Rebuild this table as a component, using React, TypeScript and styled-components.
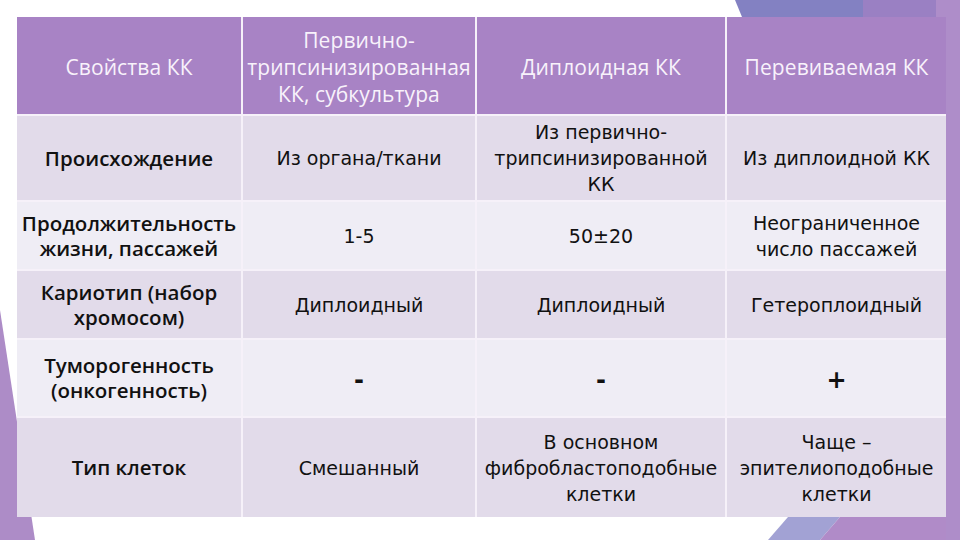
import React from "react";
import styled, { createGlobalStyle } from "styled-components";

const GlobalStyle = createGlobalStyle`
  html, body {
    margin: 0;
    padding: 0;
    background: #ffffff;
  }
`;

const Slide = styled.div`
  position: relative;
  width: 960px;
  height: 540px;
  overflow: hidden;
  background: #ffffff;
  padding: 17px 0 0 17px;
  box-sizing: border-box;
`;

const Decor = styled.svg`
  position: absolute;
  left: 0;
  top: 0;
  width: 960px;
  height: 540px;
`;

const Table = styled.div`
  position: relative;
  width: 929px;
  height: 500px;
  display: grid;
  grid-template-columns: 224px 232px 248px 219px;
  grid-template-rows: 97px 84px 67px 67px 76px 99px;
  gap: 2px;
  background: #f6f1f9;
`;

const Cell = styled.div<{ $tone: "head" | "dark" | "light" }>`
  display: flex;
  align-items: center;
  justify-content: center;
  text-align: center;
  padding: 0;
  background: ${(p) =>
    p.$tone === "head" ? "#a883c5" : p.$tone === "dark" ? "#e2dbea" : "#efedf5"};
  color: ${(p) => (p.$tone === "head" ? "#f8f2fb" : "#111111")};
  font-family: "DejaVu Sans", "Liberation Sans", sans-serif;
  font-size: 19px;
  line-height: 26px;
  white-space: pre-line;
`;

const HeadText = styled.span`
  font-family: "Open Sans", "DejaVu Sans", sans-serif;
  font-weight: 500;
  font-size: 21px;
  line-height: 27px;
  letter-spacing: 0.1px;
  padding-top: 4px;
`;

const PropText = styled.span`
  font-family: "Open Sans", "DejaVu Sans", sans-serif;
  font-weight: 600;
  font-size: 20.5px;
  line-height: 25px;
`;

const Sign = styled.span`
  font-family: "DejaVu Sans", sans-serif;
  font-weight: 700;
  font-size: 24px;
  padding-top: 4px;
`;

const headers = [
  "Свойства КК",
  "Первично-\nтрипсинизированная\nКК, субкультура",
  "Диплоидная КК",
  "Перевиваемая КК",
];

const rows: { prop: string; vals: string[]; sign?: boolean }[] = [
  {
    prop: "Происхождение",
    vals: ["Из органа/ткани", "Из первично-\nтрипсинизированной\nКК", "Из диплоидной КК"],
  },
  {
    prop: "Продолжительность\nжизни, пассажей",
    vals: ["1-5", "50±20", "Неограниченное\nчисло пассажей"],
  },
  {
    prop: "Кариотип (набор\nхромосом)",
    vals: ["Диплоидный", "Диплоидный", "Гетероплоидный"],
  },
  {
    prop: "Туморогенность\n(онкогенность)",
    vals: ["-", "-", "+"],
    sign: true,
  },
  {
    prop: "Тип клеток",
    vals: ["Смешанный", "В основном\nфибробластоподобные\nклетки", "Чаще –\nэпителиоподобные\nклетки"],
  },
];

export default function App() {
  return (
    <Slide>
      <GlobalStyle />
      <Decor viewBox="0 0 960 540">
        <polygon points="735,0 870,0 870,17 742,17" fill="#8381c2" />
        <polygon points="863,0 940,0 940,17 863,17" fill="#9a80c3" />
        <polygon points="936,0 960,0 960,540 946,540 946,17 936,17" fill="#ae8dc9" />
        <polygon points="0,310 35,540 0,540" fill="#ad8cc7" />
        <polygon points="768,540 788,517 840,517 820,540" fill="#a2a2d4" />
        <polygon points="820,540 840,517 946,517 946,540" fill="#b08bc8" />
      </Decor>
      <Table>
        {headers.map((h) => (
          <Cell key={h} $tone="head">
            <HeadText>{h}</HeadText>
          </Cell>
        ))}
        {rows.map((r, i) => {
          const tone = i % 2 === 0 ? "dark" : "light";
          return (
            <React.Fragment key={r.prop}>
              <Cell $tone={tone}>
                <PropText>{r.prop}</PropText>
              </Cell>
              {r.vals.map((v, j) => (
                <Cell key={j} $tone={tone}>
                  {r.sign ? <Sign>{v}</Sign> : v}
                </Cell>
              ))}
            </React.Fragment>
          );
        })}
      </Table>
    </Slide>
  );
}
